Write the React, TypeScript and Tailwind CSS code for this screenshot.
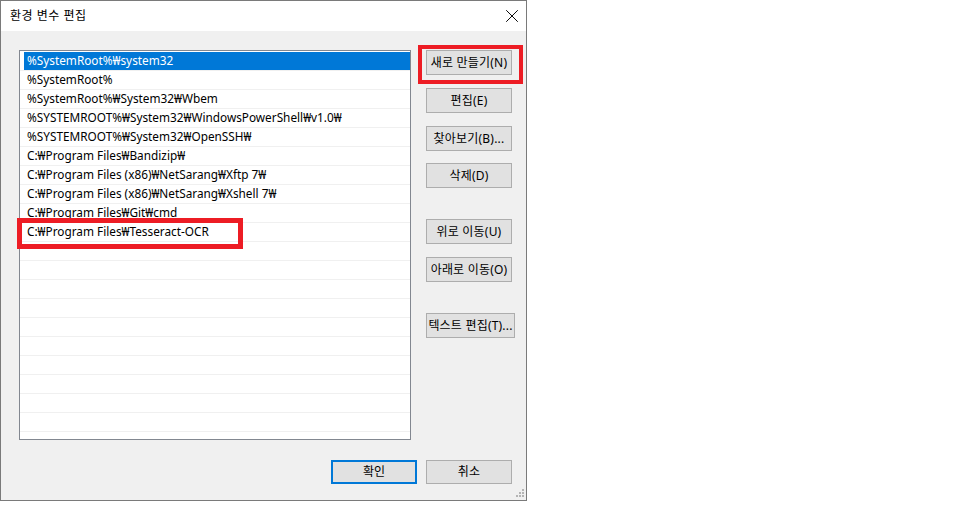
import { X } from 'lucide-react';

const paths = [
  '%SystemRoot%₩system32',
  '%SystemRoot%',
  '%SystemRoot%₩System32₩Wbem',
  '%SYSTEMROOT%₩System32₩WindowsPowerShell₩v1.0₩',
  '%SYSTEMROOT%₩System32₩OpenSSH₩',
  'C:₩Program Files₩Bandizip₩',
  'C:₩Program Files (x86)₩NetSarang₩Xftp 7₩',
  'C:₩Program Files (x86)₩NetSarang₩Xshell 7₩',
  'C:₩Program Files₩Git₩cmd',
  'C:₩Program Files₩Tesseract-OCR',
];

const font = { fontFamily: '"Noto Sans", "Noto Sans CJK KR", sans-serif' };

function Btn({ label, className = '' }: { label: string; className?: string }) {
  return (
    <div
      className={`h-[25px] bg-[#e1e1e1] border border-[#adadad] flex items-center justify-center text-[12px] tracking-[0.2px] text-black whitespace-nowrap overflow-hidden ${className}`}
    >
      {label}
    </div>
  );
}

export default function App() {
  const rows = [...paths, ...Array(11).fill('')];

  return (
    <div className="w-[979px] h-[512px] bg-white" style={font}>
      <div className="relative w-[527px] h-[501px] border border-[#7a7a7a] flex flex-col">
        {/* title bar */}
        <div className="h-[30px] bg-white flex items-center justify-between pl-[9px] pr-[3px]">
          <span className="text-[12px] text-black tracking-[0.5px]">환경 변수 편집</span>
          <X className="w-[22px] h-[22px] text-black" strokeWidth={1.05} />
        </div>

        {/* body */}
        <div className="flex-1 bg-[#f0f0f0] flex flex-col pl-[18px] pt-[19px]">
          <div className="flex">
            <div className="w-[392px] h-[390px] bg-white border border-[#828790] overflow-hidden pt-[1px]">
              {rows.map((p, i) => (
                <div key={i} className="h-[19px] border-b border-[#f0f0f0] flex">
                  <div
                    className={`flex-1 ml-[4px] flex items-center pl-[3px] text-[11.8px] whitespace-nowrap ${
                      i === 0 ? 'bg-[#0078d7] text-white' : 'text-black'
                    }`}
                  >
                    {p}
                  </div>
                </div>
              ))}
            </div>

            <div className="ml-[15px] flex flex-col">
              <Btn label="새로 만들기(N)" className="w-[86px]" />
              <Btn label="편집(E)" className="w-[86px] mt-[13px]" />
              <Btn label="찾아보기(B)..." className="w-[86px] mt-[13px]" />
              <Btn label="삭제(D)" className="w-[86px] mt-[12px]" />
              <Btn label="위로 이동(U)" className="w-[86px] mt-[31px]" />
              <Btn label="아래로 이동(O)" className="w-[86px] mt-[13px]" />
              <Btn label="텍스트 편집(T)..." className="w-[89px] mt-[31px]" />
            </div>
          </div>

          <div className="flex justify-end mt-[20px] pr-[14px] gap-[9px]">
            <div className="w-[86px] h-[24px] bg-[#e1e1e1] border-2 border-[#0078d7] flex items-center justify-center text-[12px] text-black">
              확인
            </div>
            <Btn label="취소" className="w-[86px] !h-[24px]" />
          </div>
        </div>

        {/* resize grip */}
        <svg className="absolute right-[1px] bottom-[2px]" width="9" height="9" viewBox="0 0 9 9">
          <rect x="6" y="0" width="2" height="2" fill="#b4b4b4" />
          <rect x="3" y="3" width="2" height="2" fill="#b4b4b4" />
          <rect x="6" y="3" width="2" height="2" fill="#b4b4b4" />
          <rect x="0" y="6" width="2" height="2" fill="#b4b4b4" />
          <rect x="3" y="6" width="2" height="2" fill="#b4b4b4" />
          <rect x="6" y="6" width="2" height="2" fill="#b4b4b4" />
        </svg>

        {/* red annotation boxes */}
        <div className="absolute left-[417px] top-[44px] w-[105px] h-[39px] border-4 border-[#ed1c24]" />
        <div className="absolute left-[16px] top-[217px] w-[226px] h-[31px] border-[5px] border-[#ed1c24]" />
      </div>
    </div>
  );
}
